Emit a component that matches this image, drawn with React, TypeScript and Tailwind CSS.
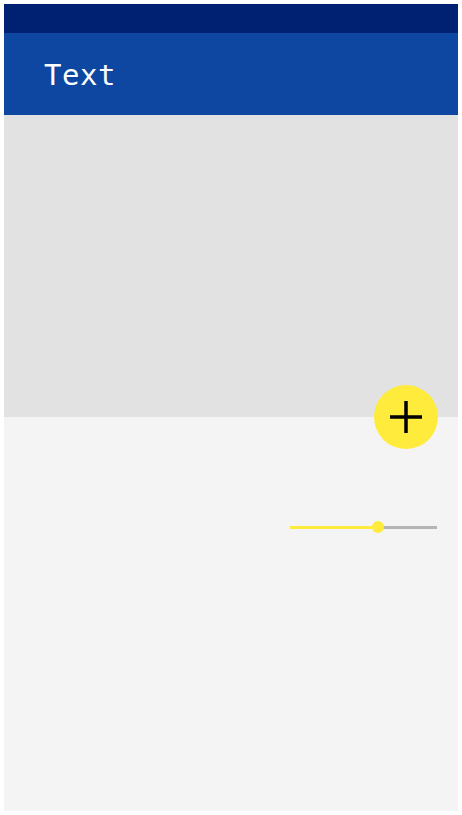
export default function App() {
  return (
    <div className="w-[462px] h-[815px] bg-white p-1 pb-1">
      <div className="flex h-[807px] w-[454px] flex-col bg-[#f4f4f4]">
        <div className="h-[29px] bg-[#002171]" />
        <div className="flex h-[82px] items-center bg-[#0d47a1] pl-[40px] pt-[2px]">
          <span className="text-[29px] leading-none tracking-[0.5px] text-white [font-family:'DejaVu_Sans_Mono',monospace]">
            Text
          </span>
        </div>
        <div className="relative h-[302px] bg-[#e2e2e2]">
          <button className="absolute -bottom-[32px] right-[20px] z-10 flex h-[64px] w-[64px] items-center justify-center rounded-full bg-[#ffeb3b]">
            <svg width="34" height="34" viewBox="0 0 34 34">
              <path d="M17 1v32M1 17h32" stroke="#000" strokeWidth="3.5" />
            </svg>
          </button>
        </div>
        <div className="flex justify-end pr-[21px] pt-[104px]">
          <div className="relative flex h-[12px] w-[147px] items-center">
            <div className="h-[3px] w-[88px] bg-[#ffeb3b]" />
            <div className="h-[3px] flex-1 bg-[#b5b5b5]" />
            <div className="absolute left-[82px] top-0 h-[12px] w-[12px] rounded-full bg-[#ffeb3b]" />
          </div>
        </div>
      </div>
    </div>
  );
}
